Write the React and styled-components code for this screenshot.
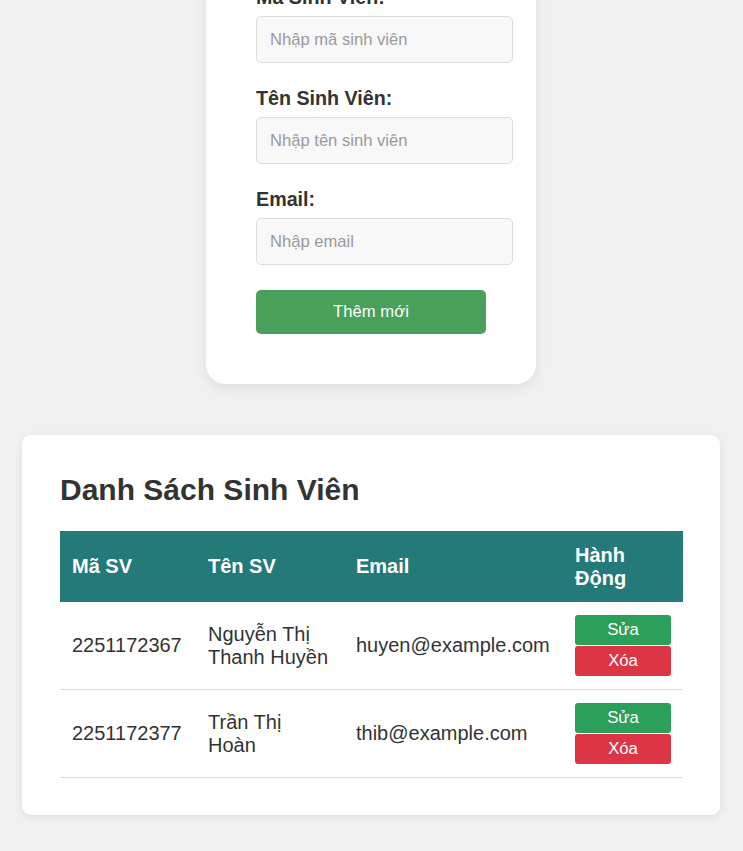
import React from "react";
import styled, { createGlobalStyle } from "styled-components";

const Global = createGlobalStyle`
  html, body { margin: 0; padding: 0; background: #f1f1f1; }
  body { font-family: "Liberation Sans", Arial, sans-serif; color: #333; overflow: hidden; }
  * { box-sizing: border-box; }
`;

const Page = styled.div`
  display: flex;
  flex-direction: column;
  align-items: center;
  padding: 0 23px 37px 22px;
`;

const FormCard = styled.div`
  display: flex;
  flex-direction: column;
  align-items: flex-start;
  width: 330px;
  margin-top: -44px;
  background: #fff;
  border-radius: 20px;
  box-shadow: 0 4px 14px rgba(0, 0, 0, 0.08);
  padding: 30px 23px 50px 50px;
`;

const Field = styled.div`
  display: flex;
  flex-direction: column;
  margin-bottom: 24px;
`;

const Label = styled.label`
  font-size: 19.7px;
  font-weight: bold;
  line-height: 23px;
  margin-bottom: 7px;
  color: #333;
`;

const Input = styled.input`
  width: 257px;
  height: 47px;
  padding: 0 13px;
  border: 1px solid #ddd;
  border-radius: 5px;
  background: #f8f8f8;
  font-family: "Liberation Sans", Arial, sans-serif;
  font-size: 16.6px;
  color: #333;
  &::placeholder { color: #9a9a9a; }
`;

const SubmitButton = styled.button`
  display: block;
  width: 230px;
  height: 44px;
  margin-top: 1px;
  border: none;
  border-radius: 5px;
  background: #49a05a;
  color: #fff;
  font-family: "Liberation Sans", Arial, sans-serif;
  font-size: 16.7px;
`;

const ListCard = styled.div`
  align-self: stretch;
  margin-top: 51px;
  background: #fff;
  border-radius: 9px;
  box-shadow: 0 2px 10px rgba(0, 0, 0, 0.08);
  padding: 38px 37px 37px 38px;
`;

const Title = styled.h2`
  margin: 0 0 24px;
  font-size: 30px;
  line-height: 34px;
  font-weight: bold;
  color: #333;
`;

const Table = styled.table`
  width: 623px;
  border-collapse: collapse;
  table-layout: fixed;
`;

const Th = styled.th`
  background: #237a78;
  color: #fff;
  text-align: left;
  font-size: 20px;
  line-height: 23px;
  font-weight: bold;
  padding: 12px 12px;
  height: 71px;
`;

const Td = styled.td`
  font-size: 20px;
  line-height: 23px;
  padding: 13px 12px;
  border-bottom: 1px solid #ddd;
  vertical-align: middle;
  color: #333;
  height: 87px;
`;

const ActionButton = styled.button`
  display: block;
  width: 96px;
  height: 30px;
  border: none;
  border-radius: 3px;
  background: ${(p) => (p.$danger ? "#dc3545" : "#2aa05b")};
  color: #fff;
  font-family: "Liberation Sans", Arial, sans-serif;
  font-size: 16.7px;
  padding: 0;
  & + & { margin-top: 1px; }
`;

const students = [
  { id: "2251172367", name: "Nguyễn Thị Thanh Huyền", email: "huyen@example.com" },
  { id: "2251172377", name: "Trần Thị Hoàn", email: "thib@example.com" },
];

export default function App() {
  return (
    <>
      <Global />
      <Page>
        <FormCard>
          <Field>
            <Label>Mã Sinh Viên:</Label>
            <Input placeholder="Nhập mã sinh viên" />
          </Field>
          <Field>
            <Label>Tên Sinh Viên:</Label>
            <Input placeholder="Nhập tên sinh viên" />
          </Field>
          <Field>
            <Label>Email:</Label>
            <Input placeholder="Nhập email" />
          </Field>
          <SubmitButton>Thêm mới</SubmitButton>
        </FormCard>
        <ListCard>
          <Title>Danh Sách Sinh Viên</Title>
          <Table>
            <colgroup>
              <col style={{ width: 136 }} />
              <col style={{ width: 148 }} />
              <col style={{ width: 219 }} />
              <col style={{ width: 120 }} />
            </colgroup>
            <thead>
              <tr>
                <Th>Mã SV</Th>
                <Th>Tên SV</Th>
                <Th>Email</Th>
                <Th>Hành Động</Th>
              </tr>
            </thead>
            <tbody>
              {students.map((s) => (
                <tr key={s.id}>
                  <Td>{s.id}</Td>
                  <Td>{s.name}</Td>
                  <Td>{s.email}</Td>
                  <Td>
                    <ActionButton>Sửa</ActionButton>
                    <ActionButton $danger>Xóa</ActionButton>
                  </Td>
                </tr>
              ))}
            </tbody>
          </Table>
        </ListCard>
      </Page>
    </>
  );
}
